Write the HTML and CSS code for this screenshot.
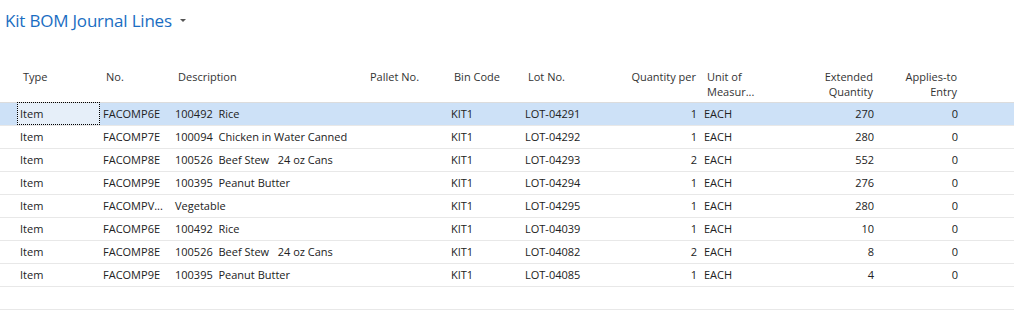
FILE: index.html
```html
<!DOCTYPE html>
<html>
<head>
  <meta charset="UTF-8">
  <link rel="stylesheet" href="styles.css">
  <title>Kit BOM Journal Lines</title>
</head>
<body>
  <div class="page">
    <h1 class="title">Kit BOM Journal Lines <span class="caret"></span></h1>

    <table class="lines">
      <colgroup>
        <col class="c-gap">
        <col class="c-type">
        <col class="c-no">
        <col class="c-desc">
        <col class="c-pallet">
        <col class="c-bin">
        <col class="c-lot">
        <col class="c-qty">
        <col class="c-uom">
        <col class="c-ext">
        <col class="c-appl">
        <col>
      </colgroup>
      <thead>
        <tr>
          <th></th>
          <th>Type</th>
          <th>No.</th>
          <th>Description</th>
          <th>Pallet No.</th>
          <th>Bin Code</th>
          <th>Lot No.</th>
          <th class="num">Quantity per</th>
          <th>Unit of<br>Measur...</th>
          <th class="num">Extended<br>Quantity</th>
          <th class="num">Applies-to<br>Entry</th>
          <th></th>
        </tr>
      </thead>
      <tbody>
        <tr class="selected">
          <td></td><td class="focus">Item</td><td>FACOMP6E</td><td>100492&nbsp; Rice</td><td></td><td>KIT1</td><td>LOT-04291</td><td class="num">1</td><td>EACH</td><td class="num">270</td><td class="num">0</td><td></td>
        </tr>
        <tr>
          <td></td><td>Item</td><td>FACOMP7E</td><td>100094&nbsp; Chicken in Water Canned</td><td></td><td>KIT1</td><td>LOT-04292</td><td class="num">1</td><td>EACH</td><td class="num">280</td><td class="num">0</td><td></td>
        </tr>
        <tr>
          <td></td><td>Item</td><td>FACOMP8E</td><td>100526&nbsp; Beef Stew&nbsp;&nbsp; 24 oz Cans</td><td></td><td>KIT1</td><td>LOT-04293</td><td class="num">2</td><td>EACH</td><td class="num">552</td><td class="num">0</td><td></td>
        </tr>
        <tr>
          <td></td><td>Item</td><td>FACOMP9E</td><td>100395&nbsp; Peanut Butter</td><td></td><td>KIT1</td><td>LOT-04294</td><td class="num">1</td><td>EACH</td><td class="num">276</td><td class="num">0</td><td></td>
        </tr>
        <tr>
          <td></td><td>Item</td><td>FACOMPV...</td><td>Vegetable</td><td></td><td>KIT1</td><td>LOT-04295</td><td class="num">1</td><td>EACH</td><td class="num">280</td><td class="num">0</td><td></td>
        </tr>
        <tr>
          <td></td><td>Item</td><td>FACOMP6E</td><td>100492&nbsp; Rice</td><td></td><td>KIT1</td><td>LOT-04039</td><td class="num">1</td><td>EACH</td><td class="num">10</td><td class="num">0</td><td></td>
        </tr>
        <tr>
          <td></td><td>Item</td><td>FACOMP8E</td><td>100526&nbsp; Beef Stew&nbsp;&nbsp; 24 oz Cans</td><td></td><td>KIT1</td><td>LOT-04082</td><td class="num">2</td><td>EACH</td><td class="num">8</td><td class="num">0</td><td></td>
        </tr>
        <tr>
          <td></td><td>Item</td><td>FACOMP9E</td><td>100395&nbsp; Peanut Butter</td><td></td><td>KIT1</td><td>LOT-04085</td><td class="num">1</td><td>EACH</td><td class="num">4</td><td class="num">0</td><td></td>
        </tr>
        <tr class="empty">
          <td></td><td></td><td></td><td></td><td></td><td></td><td></td><td></td><td></td><td></td><td></td><td></td>
        </tr>
      </tbody>
    </table>
  </div>
</body>
</html>
```

FILE: styles.css
```css
body {
  font-family: "Open Sans", "Noto Sans", sans-serif;
  background-color: #fff;
  color: #222;
  margin: 0;
  padding: 0;
}

.page {
  width: 1014px;
  height: 315px;
  overflow: hidden;
}

.title {
  font-size: 17px;
  font-weight: 400;
  color: #1a6dc2;
  margin: 0;
  padding: 9px 0 0 5px;
  height: 60px;
  box-sizing: border-box;
  letter-spacing: -0.2px;
}

.caret {
  display: inline-block;
  width: 0;
  height: 0;
  border-left: 3px solid transparent;
  border-right: 3px solid transparent;
  border-top: 3px solid #555;
  vertical-align: middle;
  margin-left: 4px;
  position: relative;
  top: -2px;
}

.lines {
  width: 1014px;
  border-collapse: collapse;
  table-layout: fixed;
  font-size: 11px;
}

.c-gap { width: 17px; }
.c-type { width: 83px; }
.c-no { width: 72px; }
.c-desc { width: 192px; }
.c-pallet { width: 84px; }
.c-bin { width: 74px; }
.c-lot { width: 78px; }
.c-qty { width: 101px; }
.c-uom { width: 80px; }
.c-ext { width: 97px; }
.c-appl { width: 84px; }

.lines th {
  font-weight: 400;
  color: #333;
  text-align: left;
  vertical-align: top;
  line-height: 15px;
  height: 42px;
  padding: 9px 4px 0 6px;
  border-bottom: 1px solid #dcdcdc;
  box-sizing: border-box;
  white-space: nowrap;
}

.lines td {
  height: 23px;
  padding: 0 3px 0 3px;
  box-sizing: border-box;
  border-bottom: 1px solid #e8e8e8;
  white-space: nowrap;
  overflow: hidden;
}

.lines .num {
  text-align: right;
  padding-right: 4px;
}

.lines th.num {
  padding-right: 5px;
}

.selected td {
  background-color: #cde1f7;
}

.selected td.focus {
  background-color: #e6eff9;
  outline: 1px dotted #000;
  outline-offset: -1px;
}
```
